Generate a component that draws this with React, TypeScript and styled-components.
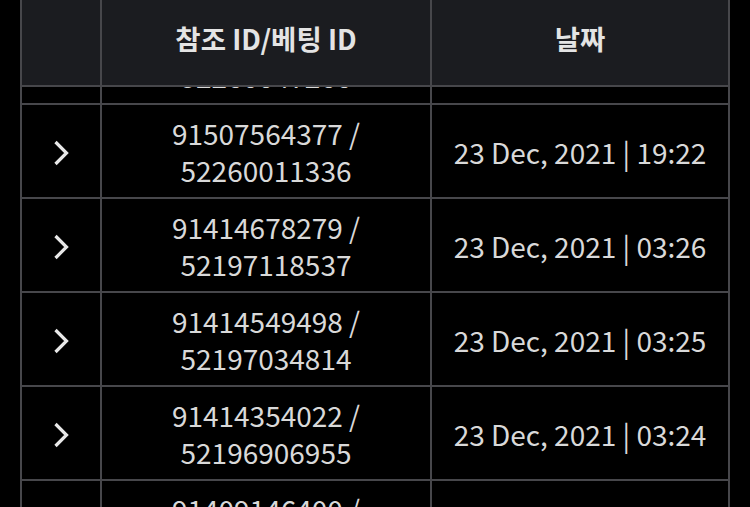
import React from "react";
import styled, { createGlobalStyle } from "styled-components";

const Global = createGlobalStyle`
  html, body { margin: 0; padding: 0; background: #000; }
  body { font-family: "Noto Sans CJK KR", "Noto Sans", sans-serif; }
  * { box-sizing: border-box; }
`;

const LINE = "#47474b";

const Page = styled.div`
  width: 750px;
  height: 507px;
  overflow: hidden;
  background: #000;
  padding: 0 20px;
`;

const Table = styled.div`
  display: flex;
  flex-direction: column;
  gap: 2px;
  background: ${LINE};
  padding: 0 2px;
  height: 507px;
`;

const Row = styled.div<{ $h: number }>`
  display: grid;
  grid-template-columns: 78px 328px 296px;
  gap: 2px;
  height: ${(p) => p.$h}px;
  flex-shrink: 0;
`;

const HeadCell = styled.div`
  background: #1b1c20;
  color: #e4e4e4;
  font-weight: 700;
  font-size: 27.5px;
  display: flex;
  align-items: center;
  justify-content: center;
  padding-bottom: 9px;
`;

const Viewport = styled.div`
  flex: 1;
  overflow: hidden;
`;

const Body = styled.div`
  display: flex;
  flex-direction: column;
  gap: 2px;
  margin-top: -76px;
`;

const Cell = styled.div`
  background: #000;
  color: #d9d9d9;
  font-size: 28px;
  line-height: 37px;
  display: flex;
  align-items: center;
  justify-content: center;
  text-align: center;
  padding: 2px 12px 0;
  overflow: hidden;
`;

const Chevron = () => (
  <svg width="18" height="30" viewBox="0 0 18 30" style={{ marginTop: 2 }}>
    <polyline
      points="3.5,4 14.5,15 3.5,26"
      fill="none"
      stroke="#e8e8e8"
      strokeWidth="3.2"
      strokeLinecap="butt"
      strokeLinejoin="miter"
    />
  </svg>
);

const rows = [
  ["91507593214", "52260047266", "23 Dec, 2021 | 19:40"],
  ["91507564377", "52260011336", "23 Dec, 2021 | 19:22"],
  ["91414678279", "52197118537", "23 Dec, 2021 | 03:26"],
  ["91414549498", "52197034814", "23 Dec, 2021 | 03:25"],
  ["91414354022", "52196906955", "23 Dec, 2021 | 03:24"],
  ["91409146400", "52193571208", "23 Dec, 2021 | 02:51"],
];

export default function App() {
  return (
    <>
      <Global />
      <Page>
        <Table>
          <Row $h={85}>
            <HeadCell />
            <HeadCell>참조 ID/베팅 ID</HeadCell>
            <HeadCell>날짜</HeadCell>
          </Row>
          <Viewport>
            <Body>
              {rows.map(([a, b, d]) => (
                <Row $h={92} key={a}>
                  <Cell>
                    <Chevron />
                  </Cell>
                  <Cell>{`${a} / ${b}`}</Cell>
                  <Cell>{d}</Cell>
                </Row>
              ))}
            </Body>
          </Viewport>
        </Table>
      </Page>
    </>
  );
}
